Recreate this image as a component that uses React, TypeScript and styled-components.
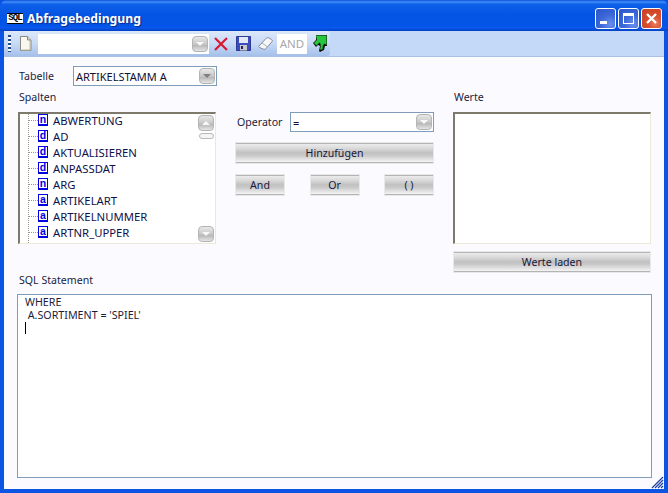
import React from "react";
import styled, { createGlobalStyle } from "styled-components";

const Global = createGlobalStyle`
  html, body { margin: 0; padding: 0; background: #0a50e0; }
  body { width: 668px; height: 493px; overflow: hidden; font-family: "Noto Sans", "Open Sans", sans-serif; font-size: 10.6px; color: #1c1c3c; }
`;

const Win = styled.div`
  width: 668px; height: 493px; box-sizing: border-box; display: flex; flex-direction: column;
  background: #0c54e4; border-radius: 7px 7px 0 0; overflow: hidden;
`;
const TitleBar = styled.div`
  height: 31px; flex: none; box-sizing: border-box; display: flex; align-items: center; padding: 5px 6px 0 7px; gap: 4px;
  background: linear-gradient(180deg, #0a4fd8 0%, #3f8cf8 6%, #0d5fe8 14%, #0454e4 50%, #0454e8 82%, #0a58ee 90%, #0340c0 100%);
`;
const SqlLogo = styled.div`
  width: 16px; height: 9px; background: #fff; color: #000; border-top: 1px solid #000; border-bottom: 1px solid #000; box-sizing: content-box;
  font: bold 9px/9px "Liberation Mono", monospace; letter-spacing: -0.9px; text-align: center; overflow: hidden;
`;
const Title = styled.div`
  flex: 1; color: #fff; font: bold 12.2px "Noto Sans", sans-serif; text-shadow: 1px 1px 1px #0a2a90;
`;
const WinBtn = styled.div<{ $close?: boolean }>`
  width: 21px; height: 21px; box-sizing: border-box; border: 1px solid #fff; border-radius: 3px; margin-left: -2px;
  display: flex; align-items: center; justify-content: center;
  background: ${(p) => p.$close
    ? "radial-gradient(circle at 70% 75%, #e88060 0%, #d85030 35%, #c84020 100%)"
    : "radial-gradient(circle at 75% 80%, #6a90ee 0%, #3c68d8 45%, #2c54c8 100%)"};
`;
const Client = styled.div`
  flex: 1; margin: 0 4px 4px; background: #fbfbff; display: flex; flex-direction: column; position: relative; min-height: 0;
`;
const ToolArea = styled.div`
  height: 26px; flex: none; background: #c4d8f8; border-bottom: 1px solid #a8c0e4; box-sizing: border-box;
`;
const Toolbar = styled.div`
  width: 326px; height: 25px; display: flex; align-items: center; padding-left: 4px; box-sizing: border-box;
  background: linear-gradient(180deg, #dce8fa 0%, #c8daf6 50%, #a4c0ea 100%); border-radius: 0 3px 3px 0;
`;
const Grip = styled.div`
  width: 3px; height: 17px; margin-right: 9px;
  background: repeating-linear-gradient(180deg, #1f4a8c 0 2px, #fff 2px 4px);
`;
const ToolCombo = styled.div`
  width: 171px; height: 20px; margin-left: 6px; background: #fff; display: flex; align-items: center; justify-content: flex-end; padding-right: 1px; box-sizing: border-box;
`;
const ToolIcon = styled.div<{ $first?: boolean }>`
  width: 18px; height: 20px; margin-left: ${(p) => (p.$first ? "3px" : "4px")}; display: flex; align-items: center; justify-content: center;
`;
const AndBox = styled.div`
  width: 30px; height: 20px; margin: 0 6px 0 3px; background: #fff; color: #a8a8a8; font-size: 11.5px; display: flex; align-items: center; justify-content: center;
`;
const Body = styled.div`
  flex: 1; display: flex; flex-direction: column; padding: 9px 12px 11px 13px; min-height: 0;
`;
const TableRow = styled.div`
  display: flex; align-items: center; height: 20px; margin-left: 1px;
`;
const Label = styled.div`
  color: #1c1c3c; font-size: 10.6px; line-height: 15px; white-space: nowrap;
`;
const TableLabel = styled(Label)`
  width: 54px; padding-left: 1px;
`;
const Combo = styled.div<{ $w: string }>`
  width: ${(p) => p.$w}; height: 20px; box-sizing: border-box; background: #fff; border: 1px solid #7f9db9;
  display: flex; align-items: center; justify-content: space-between; padding: 0 1px 0 2px; font-size: 11px; color: #101030;
`;
const Columns = styled.div`
  display: grid; grid-template-columns: 198px 199px 198px; column-gap: 19px; margin: 4px 0 0 1px;
`;
const Col = styled.div`
  display: flex; flex-direction: column;
`;
const ColLabel = styled(Label)`
  height: 15px; margin: 0 0 7px 1px;
`;
const ListBox = styled.div`
  height: 132px; box-sizing: border-box; background: #fff; border: 1px solid #ece9d8; border-top: 2px solid #7d7a6c; border-left: 2px solid #7d7a6c;
  display: flex; overflow: hidden;
`;
const Tree = styled.div`
  flex: 1; margin-top: -2px; overflow: hidden; position: relative;
`;
const TreeLine = styled.div`
  position: absolute; left: 8px; top: 0; bottom: 0; border-left: 1px dotted #9a9a88;
`;
const TreeRow = styled.div`
  height: 16px; display: flex; align-items: center; padding-left: 8px; font-size: 11.3px; color: #10104a; white-space: nowrap;
`;
const Dots = styled.div`
  width: 10px; flex: none; border-top: 1px dotted #9a9a88;
`;
const TypeBadge = styled.div`
  width: 10px; height: 12px; border: 1px solid #0000e0; background: #fff; color: #0000e0; margin-right: 5px; flex: none; box-sizing: border-box;
  font: bold 10.5px/9px "Liberation Sans", sans-serif; text-align: center; box-shadow: inset 0 -1px 0 #0000e0;
`;
const Scroll = styled.div`
  width: 17px; flex: none; display: flex; flex-direction: column; padding: 1px 0; box-sizing: border-box;
`;
const Thumb = styled.div`
  height: 6px; width: 15px; margin: 2px 0 0 1px; border: 1px solid #b8b8b8; border-radius: 3px; box-sizing: border-box; background: #f4f4f4;
`;
const Spacer = styled.div`flex: 1;`;
const ArrowBtn = styled.div<{ $up?: boolean; $dark?: boolean }>`
  width: 16px; height: 16px; box-sizing: border-box; border: 1px solid #b4b4b4; border-radius: 4px; flex: none;
  background: linear-gradient(180deg, #e8e8e8 0%, #c8c8c8 50%, #b8b8b8 60%, #e4e4e4 100%);
  display: flex; align-items: center; justify-content: center;
  &::after { content: ""; width: 0; height: 0; border-left: 4px solid transparent; border-right: 4px solid transparent;
    ${(p) => (p.$up ? "border-bottom: 4px solid #f8f8f8;" : `border-top: 4px solid ${p.$dark ? "#808080" : "#f8f8f8"};`)} }
`;
const OpRow = styled.div`
  display: flex; align-items: center; justify-content: space-between; height: 20px;
`;
const OpLabel = styled(Label)`
  margin-left: 2px;
`;
const Btn = styled.div<{ $w?: string }>`
  width: ${(p) => p.$w || "100%"}; height: 22px; box-sizing: border-box; border: 1px solid #e8e8e8; flex: none;
  background: linear-gradient(180deg, #efefef 0%, #dcdcdc 24%, #c2c2c2 48%, #c6c6c6 60%, #e8e8e8 86%, #fbfbfb 100%);
  box-shadow: inset 0 1px 0 #b4b4b4, inset 0 -1px 0 #b4b4b4; display: flex; align-items: center; justify-content: center; font-size: 10.6px; color: #18183a;
`;
const AddBtn = styled(Btn)`
  margin-top: 10px;
`;
const BtnRow = styled.div`
  display: flex; justify-content: space-between; margin-top: 10px;
`;
const Values = styled.div`
  height: 132px; box-sizing: border-box; background: #fff; border: 1px solid #ece9d8; border-top: 2px solid #7d7a6c; border-left: 2px solid #7d7a6c;
`;
const LoadBtn = styled(Btn)`
  margin-top: 7px;
`;
const SqlSection = styled.div`
  flex: 1; display: flex; flex-direction: column; min-height: 0;
`;
const SqlLabel = styled(Label)`
  margin: 0 0 6px 2px; height: 15px;
`;
const SqlBox = styled.div`
  flex: 1; box-sizing: border-box; width: 635px; background: #fff; border: 1px solid #7f9db9; padding: 1px 7px; font-size: 10.7px; color: #1c1c3c;
`;
const SqlLine = styled.div`
  white-space: pre; height: 13px; line-height: 13px;
`;
const Caret = styled.div`
  width: 1px; height: 12px; background: #000;
`;
const ResizeGrip = styled.div`
  position: absolute; right: 0; bottom: 0; width: 13px; height: 13px; line-height: 0;
`;

const cols: [string, string][] = [
  ["n", "ABWERTUNG"], ["d", "AD"], ["d", "AKTUALISIEREN"], ["d", "ANPASSDAT"],
  ["n", "ARG"], ["a", "ARTIKELART"], ["a", "ARTIKELNUMMER"], ["a", "ARTNR_UPPER"],
];

export default function App() {
  return (
    <Win>
      <Global />
      <TitleBar>
        <SqlLogo>SQL</SqlLogo>
        <Title>Abfragebedingung</Title>
        <WinBtn>
          <svg width="19" height="19" viewBox="0 0 19 19"><rect x="4" y="12" width="7" height="3" fill="#fff" /></svg>
        </WinBtn>
        <WinBtn>
          <svg width="19" height="19" viewBox="0 0 19 19"><path d="M4 4h11v11H4z M5 7v7h9V7z" fill="#fff" fillRule="evenodd" /></svg>
        </WinBtn>
        <WinBtn $close>
          <svg width="19" height="19" viewBox="0 0 19 19"><path d="M5 5l9 9M14 5l-9 9" stroke="#fff" strokeWidth="2.4" /></svg>
        </WinBtn>
      </TitleBar>
      <Client>
        <ToolArea>
          <Toolbar>
            <Grip />
            <svg width="12" height="15" viewBox="0 0 12 15">
              <path d="M.5.5h7l3.500 3.500v10.500H.5z" fill="#f8f8f0" stroke="#8a8a80" />
              <path d="M7.500.5v3.500h3.500" fill="#d8d8d0" stroke="#8a8a80" />
              <path d="M10 5v9H2" fill="none" stroke="#b8b8a8" />
            </svg>
            <ToolCombo><ArrowBtn /></ToolCombo>
            <ToolIcon $first>
              <svg width="16" height="16" viewBox="0 0 16 16"><path d="M2 2l12 12M14 2L2 14" stroke="#d81830" strokeWidth="2.2" /></svg>
            </ToolIcon>
            <ToolIcon>
              <svg width="15" height="15" viewBox="0 0 15 15">
                <path d="M.5.5h14v14H.5z" fill="#3a4cc0" stroke="#1a2480" strokeWidth="0.8" />
                <rect x="3" y="1" width="9" height="6" fill="#e4e8f4" />
                <rect x="4" y="9" width="7" height="5.500" fill="#c8c8c8" />
                <rect x="5" y="10" width="2" height="3" fill="#20206a" />
              </svg>
            </ToolIcon>
            <ToolIcon>
              <svg width="15" height="13" viewBox="0 0 15 13">
                <path d="M1 9l7-7.500c1-1 2-1 3-.5l2.500 1.500c1 .6 1 1.500.3 2.500L8 11.500c-1 1-2 1-3 .5L1.500 10.500c-.7-.4-.8-1-.5-1.500z" fill="#f6f6f6" stroke="#7f8a9c" />
                <path d="M4 6l5 3.500" stroke="#a8b0c0" />
              </svg>
            </ToolIcon>
            <AndBox>AND</AndBox>
            <svg width="14" height="17" viewBox="0 0 14 17">
              <path d="M0 8l3-3 0-5h11v11h-2l-1 4-4 2-1-1 1-5-2-1-2 2z" fill="#101010" />
              <path d="M1 8l3-3-1-4.500h10.500v9.500l-2-1.500c-1.500 1-2 3-2 6h-2.500c1-3 1-6-.5-7l-3 3z" fill="#26c63e" />
            </svg>
          </Toolbar>
        </ToolArea>
        <Body>
          <TableRow>
            <TableLabel>Tabelle</TableLabel>
            <Combo $w="144px">ARTIKELSTAMM A<ArrowBtn $dark /></Combo>
          </TableRow>
          <Columns>
            <Col>
              <ColLabel>Spalten</ColLabel>
              <ListBox>
                <Tree>
                  <TreeLine />
                  {cols.map(([t, n]) => (
                    <TreeRow key={n}><Dots /><TypeBadge>{t}</TypeBadge>{n}</TreeRow>
                  ))}
                </Tree>
                <Scroll>
                  <ArrowBtn $up />
                  <Thumb />
                  <Spacer />
                  <ArrowBtn />
                </Scroll>
              </ListBox>
            </Col>
            <Col>
              <ColLabel />
              <OpRow>
                <OpLabel>Operator</OpLabel>
                <Combo $w="144px">=<ArrowBtn /></Combo>
              </OpRow>
              <AddBtn>Hinzufügen</AddBtn>
              <BtnRow>
                <Btn $w="50px">And</Btn>
                <Btn $w="50px">Or</Btn>
                <Btn $w="50px">( )</Btn>
              </BtnRow>
            </Col>
            <Col>
              <ColLabel>Werte</ColLabel>
              <Values />
              <LoadBtn>Werte laden</LoadBtn>
            </Col>
          </Columns>
          <SqlSection>
            <SqlLabel>SQL Statement</SqlLabel>
            <SqlBox>
              <SqlLine>WHERE</SqlLine>
              <SqlLine> A.SORTIMENT = 'SPIEL'</SqlLine>
              <Caret />
            </SqlBox>
          </SqlSection>
        </Body>
        <ResizeGrip>
          <svg width="13" height="13" viewBox="0 0 13 13"><path d="M12 1L1 12M12 4L4 12M12 7L7 12M12 10l-2 2" stroke="#1f3fa0" strokeWidth="1.2" /></svg>
        </ResizeGrip>
      </Client>
    </Win>
  );
}
